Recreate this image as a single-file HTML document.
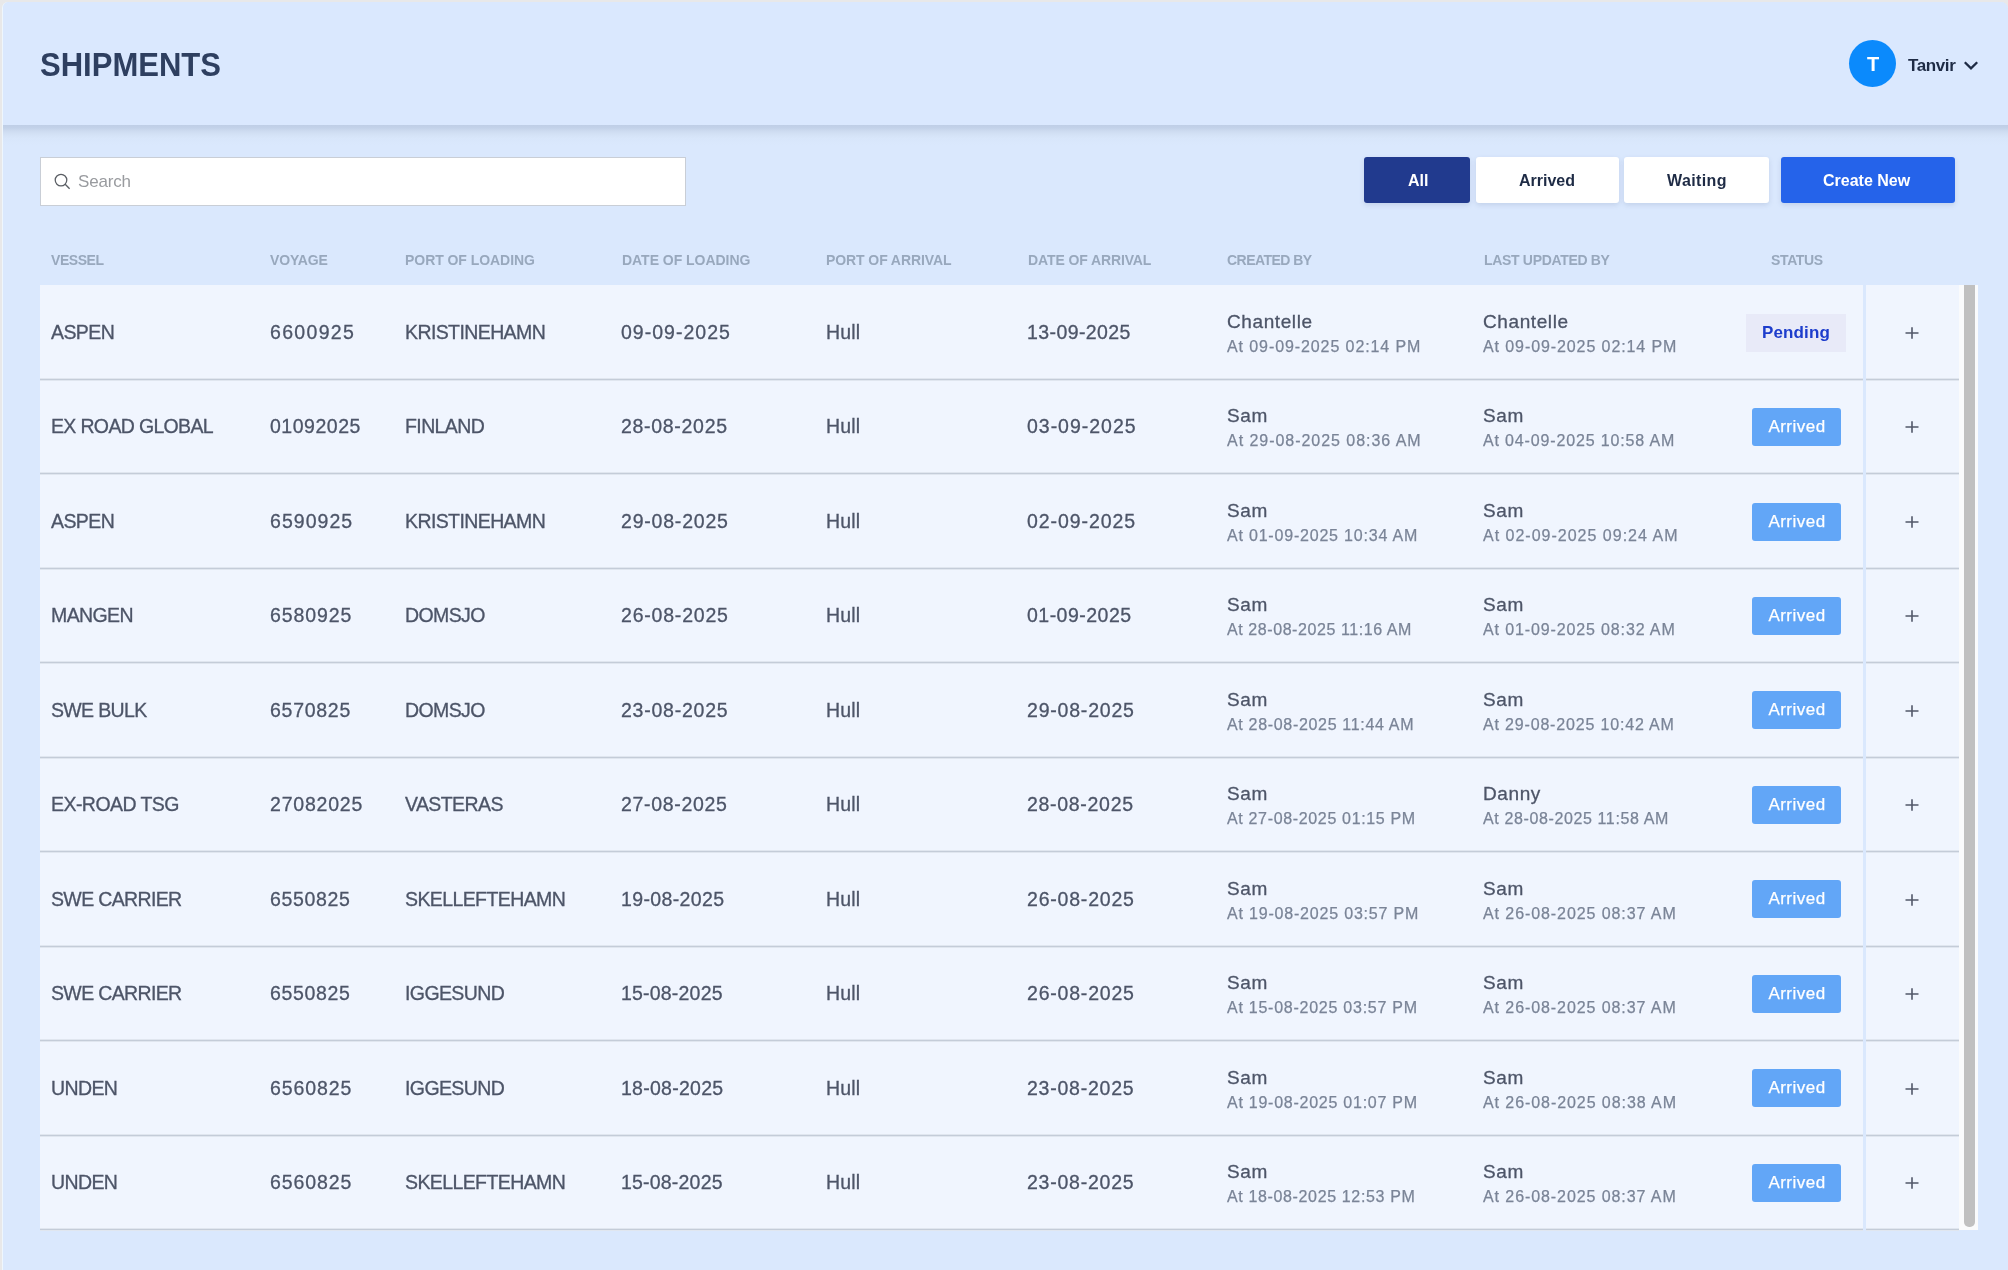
<!DOCTYPE html>
<html><head><meta charset="utf-8">
<style>
*{box-sizing:border-box;margin:0;padding:0}
html,body{width:2008px;height:1270px;overflow:hidden;background:#e8e8e9;font-family:"Liberation Sans",sans-serif}
#root{position:absolute;left:0;top:0;width:2008px;height:1270px;will-change:transform}
#root>div,#root>svg{position:absolute}
div{white-space:nowrap}
#app{left:2px;top:2px;width:2006px;height:1268px;background:#dae8fd;border-radius:6px 7px 0 0;border-left:1px solid #eef6fd}
#hdr{left:3px;top:2px;width:2005px;height:123px;background:#dae8fe;border-radius:6px 7px 0 0}
#hsh{left:3px;top:125px;width:2005px;height:20px;background:linear-gradient(#bfcee6 0px,#c3d2e9 3px,#cddbf0 6px,#d3e1f5 9px,#d8e6fa 13px,#dae8fd 20px)}
#title{left:40px;top:46px;font-size:33px;font-weight:bold;color:#2e3f60;letter-spacing:0;transform:scaleX(0.94);transform-origin:0 0}
#avatar{left:1849px;top:40px;width:47px;height:47px;border-radius:50%;background:#0b8afc}
#avT{left:1867px;top:53px;font-size:20px;font-weight:bold;color:#fff;letter-spacing:0}
#uname{left:1908px;top:56px;font-size:17px;font-weight:bold;color:#1e2b45;letter-spacing:-0.4px}
#chev{left:1963px;top:60px}
#search{left:40px;top:157px;width:646px;height:49px;background:#fff;border:1.5px solid #c9ced6}
#stext{left:78px;top:172px;font-size:17px;color:#999b9f;letter-spacing:-0.18px}
#sicon{left:51px;top:170px}
.btn{top:157px;height:46px;border-radius:3px;box-shadow:0 2px 5px rgba(100,120,160,.2)}
.bt{font-size:16px;font-weight:bold;top:172px}
#bAll{left:1364px;width:106px;background:#213a8e}
#bArr{left:1476px;width:143px;background:#fff}
#bWait{left:1624px;width:145px;background:#fff}
#bNew{left:1781px;width:174px;background:#2563ea}
.th{top:252px;font-size:14px;font-weight:bold;color:#98a8bd}
.rw{left:40px;width:1823px;background:#f0f5fe}
.ac{left:1866px;width:93px;background:#f0f5fe}
.ln{left:40px;width:1823px;height:1px;background:#c4ccd8;box-shadow:0 1px 0 #e0e6ef,0 -1px 0 #e0e6ef}
.lna{left:1866px;width:93px;height:1px;background:#c4ccd8;box-shadow:0 1px 0 #e0e6ef,0 -1px 0 #e0e6ef}
.c{font-size:19.5px;color:#4d5568;-webkit-text-stroke:0.3px #4d5568}
.n{font-size:19px;color:#4d5568;-webkit-text-stroke:0.3px #4d5568}
.d{font-size:16px;color:#7a8497;-webkit-text-stroke:0.25px #7a8497}
.arr{left:1752px;width:89px;height:38px;border-radius:3px;background:#62a6f7;color:#fff;-webkit-text-stroke:0.25px #fff;font-size:17px;line-height:38px;text-align:center;letter-spacing:0.48px;padding-left:1px}
.pen{left:1746px;width:100px;height:38px;border-radius:0;background:#e8eaf8;color:#1d3dcc;font-size:17px;font-weight:bold;line-height:38px;text-align:center;letter-spacing:0.1px}
.pl{left:1904px}
#sbt{left:1959px;top:285px;width:19px;height:945px;background:#fafbfc}
#thumb{left:1964px;top:285px;width:11px;height:942px;background:#c0c0c0;border-radius:0 0 5px 5px}
</style></head><body><div id="root">
<div id="app"></div>
<div id="hdr"></div>
<div id="hsh"></div>
<div id="title">SHIPMENTS</div>
<div id="avatar"></div>
<div id="avT">T</div>
<div id="uname">Tanvir</div>
<svg id="chev" width="16" height="11" viewBox="0 0 16 11"><path d="M1.8 2.2 L8 8.4 L14.2 2.2" fill="none" stroke="#1e2b45" stroke-width="2.3"/></svg>
<div id="search"></div>
<svg id="sicon" width="20" height="20" viewBox="0 0 20 20"><circle cx="10" cy="10.1" r="5.8" fill="none" stroke="#5a5e64" stroke-width="1.25"/><path d="M14.2 14.3 L18.6 18.7" stroke="#5a5e64" stroke-width="1.35"/></svg>
<div id="stext">Search</div>
<div class="btn" id="bAll"></div>
<div class="btn" id="bArr"></div>
<div class="btn" id="bWait"></div>
<div class="btn" id="bNew"></div>
<div class="bt" style="left:1408px;color:#fff">All</div>
<div class="bt" style="left:1519px;color:#1e2b45">Arrived</div>
<div class="bt" style="left:1667px;color:#1e2b45;letter-spacing:0.4px">Waiting</div>
<div class="bt" style="left:1823px;color:#fff">Create New</div>
<div class="th" style="left:51px;letter-spacing:-0.46px">VESSEL</div>
<div class="th" style="left:270px;letter-spacing:-0.14px">VOYAGE</div>
<div class="th" style="left:405px;letter-spacing:-0.05px">PORT OF LOADING</div>
<div class="th" style="left:622px;letter-spacing:-0.03px">DATE OF LOADING</div>
<div class="th" style="left:826px;letter-spacing:-0.09px">PORT OF ARRIVAL</div>
<div class="th" style="left:1028px;letter-spacing:-0.11px">DATE OF ARRIVAL</div>
<div class="th" style="left:1227px;letter-spacing:-0.54px">CREATED BY</div>
<div class="th" style="left:1484px;letter-spacing:-0.32px">LAST UPDATED BY</div>
<div class="th" style="left:1771px;letter-spacing:-0.36px">STATUS</div>
<div class="rw" style="top:285px;height:94px"></div><div class="ac" style="top:285px;height:94px"></div>
<div class="c" style="left:51px;top:321px;letter-spacing:-0.60px">ASPEN</div>
<div class="c" style="left:270px;top:321px;letter-spacing:1.32px">6600925</div>
<div class="c" style="left:405px;top:321px;letter-spacing:-0.60px">KRISTINEHAMN</div>
<div class="c" style="left:621px;top:321px;letter-spacing:1.02px">09-09-2025</div>
<div class="c" style="left:826px;top:321px;letter-spacing:0.13px">Hull</div>
<div class="c" style="left:1027px;top:321px;letter-spacing:0.41px">13-09-2025</div>
<div class="n" style="left:1227px;top:311px;letter-spacing:0.60px">Chantelle</div>
<div class="d" style="left:1227px;top:338px;letter-spacing:0.91px">At 09-09-2025 02:14 PM</div>
<div class="n" style="left:1483px;top:311px;letter-spacing:0.60px">Chantelle</div>
<div class="d" style="left:1483px;top:338px;letter-spacing:0.91px">At 09-09-2025 02:14 PM</div>
<div class="pen" style="top:314px">Pending</div>
<svg class="pl" style="top:325px" width="16" height="16" viewBox="0 0 16 16"><path d="M1.5 8H14.5M8 2.2V13.8" stroke="#525869" stroke-width="1.6"/></svg>
<div class="rw" style="top:379px;height:95px"></div><div class="ac" style="top:379px;height:95px"></div>
<div class="c" style="left:51px;top:415px;letter-spacing:-0.66px">EX ROAD GLOBAL</div>
<div class="c" style="left:270px;top:415px;letter-spacing:0.53px">01092025</div>
<div class="c" style="left:405px;top:415px;letter-spacing:-0.60px">FINLAND</div>
<div class="c" style="left:621px;top:415px;letter-spacing:0.70px">28-08-2025</div>
<div class="c" style="left:826px;top:415px;letter-spacing:0.13px">Hull</div>
<div class="c" style="left:1027px;top:415px;letter-spacing:0.98px">03-09-2025</div>
<div class="n" style="left:1227px;top:405px;letter-spacing:0.60px">Sam</div>
<div class="d" style="left:1227px;top:432px;letter-spacing:0.96px">At 29-08-2025 08:36 AM</div>
<div class="n" style="left:1483px;top:405px;letter-spacing:0.60px">Sam</div>
<div class="d" style="left:1483px;top:432px;letter-spacing:0.85px">At 04-09-2025 10:58 AM</div>
<div class="arr" style="top:408px">Arrived</div>
<svg class="pl" style="top:419px" width="16" height="16" viewBox="0 0 16 16"><path d="M1.5 8H14.5M8 2.2V13.8" stroke="#525869" stroke-width="1.6"/></svg>
<div class="rw" style="top:474px;height:94px"></div><div class="ac" style="top:474px;height:94px"></div>
<div class="c" style="left:51px;top:510px;letter-spacing:-0.60px">ASPEN</div>
<div class="c" style="left:270px;top:510px;letter-spacing:1.05px">6590925</div>
<div class="c" style="left:405px;top:510px;letter-spacing:-0.60px">KRISTINEHAMN</div>
<div class="c" style="left:621px;top:510px;letter-spacing:0.80px">29-08-2025</div>
<div class="c" style="left:826px;top:510px;letter-spacing:0.13px">Hull</div>
<div class="c" style="left:1027px;top:510px;letter-spacing:0.92px">02-09-2025</div>
<div class="n" style="left:1227px;top:500px;letter-spacing:0.60px">Sam</div>
<div class="d" style="left:1227px;top:527px;letter-spacing:0.80px">At 01-09-2025 10:34 AM</div>
<div class="n" style="left:1483px;top:500px;letter-spacing:0.60px">Sam</div>
<div class="d" style="left:1483px;top:527px;letter-spacing:1.00px">At 02-09-2025 09:24 AM</div>
<div class="arr" style="top:503px">Arrived</div>
<svg class="pl" style="top:514px" width="16" height="16" viewBox="0 0 16 16"><path d="M1.5 8H14.5M8 2.2V13.8" stroke="#525869" stroke-width="1.6"/></svg>
<div class="rw" style="top:568px;height:95px"></div><div class="ac" style="top:568px;height:95px"></div>
<div class="c" style="left:51px;top:604px;letter-spacing:-0.60px">MANGEN</div>
<div class="c" style="left:270px;top:604px;letter-spacing:0.90px">6580925</div>
<div class="c" style="left:405px;top:604px;letter-spacing:-0.60px">DOMSJO</div>
<div class="c" style="left:621px;top:604px;letter-spacing:0.80px">26-08-2025</div>
<div class="c" style="left:826px;top:604px;letter-spacing:0.13px">Hull</div>
<div class="c" style="left:1027px;top:604px;letter-spacing:0.48px">01-09-2025</div>
<div class="n" style="left:1227px;top:594px;letter-spacing:0.60px">Sam</div>
<div class="d" style="left:1227px;top:621px;letter-spacing:0.58px">At 28-08-2025 11:16 AM</div>
<div class="n" style="left:1483px;top:594px;letter-spacing:0.60px">Sam</div>
<div class="d" style="left:1483px;top:621px;letter-spacing:0.87px">At 01-09-2025 08:32 AM</div>
<div class="arr" style="top:597px">Arrived</div>
<svg class="pl" style="top:608px" width="16" height="16" viewBox="0 0 16 16"><path d="M1.5 8H14.5M8 2.2V13.8" stroke="#525869" stroke-width="1.6"/></svg>
<div class="rw" style="top:663px;height:94px"></div><div class="ac" style="top:663px;height:94px"></div>
<div class="c" style="left:51px;top:699px;letter-spacing:-0.66px">SWE BULK</div>
<div class="c" style="left:270px;top:699px;letter-spacing:0.73px">6570825</div>
<div class="c" style="left:405px;top:699px;letter-spacing:-0.60px">DOMSJO</div>
<div class="c" style="left:621px;top:699px;letter-spacing:0.76px">23-08-2025</div>
<div class="c" style="left:826px;top:699px;letter-spacing:0.13px">Hull</div>
<div class="c" style="left:1027px;top:699px;letter-spacing:0.80px">29-08-2025</div>
<div class="n" style="left:1227px;top:689px;letter-spacing:0.60px">Sam</div>
<div class="d" style="left:1227px;top:716px;letter-spacing:0.68px">At 28-08-2025 11:44 AM</div>
<div class="n" style="left:1483px;top:689px;letter-spacing:0.60px">Sam</div>
<div class="d" style="left:1483px;top:716px;letter-spacing:0.83px">At 29-08-2025 10:42 AM</div>
<div class="arr" style="top:691px">Arrived</div>
<svg class="pl" style="top:703px" width="16" height="16" viewBox="0 0 16 16"><path d="M1.5 8H14.5M8 2.2V13.8" stroke="#525869" stroke-width="1.6"/></svg>
<div class="rw" style="top:757px;height:95px"></div><div class="ac" style="top:757px;height:95px"></div>
<div class="c" style="left:51px;top:793px;letter-spacing:-0.55px">EX-ROAD TSG</div>
<div class="c" style="left:270px;top:793px;letter-spacing:0.80px">27082025</div>
<div class="c" style="left:405px;top:793px;letter-spacing:-0.60px">VASTERAS</div>
<div class="c" style="left:621px;top:793px;letter-spacing:0.69px">27-08-2025</div>
<div class="c" style="left:826px;top:793px;letter-spacing:0.13px">Hull</div>
<div class="c" style="left:1027px;top:793px;letter-spacing:0.70px">28-08-2025</div>
<div class="n" style="left:1227px;top:783px;letter-spacing:0.60px">Sam</div>
<div class="d" style="left:1227px;top:810px;letter-spacing:0.66px">At 27-08-2025 01:15 PM</div>
<div class="n" style="left:1483px;top:783px;letter-spacing:0.60px">Danny</div>
<div class="d" style="left:1483px;top:810px;letter-spacing:0.62px">At 28-08-2025 11:58 AM</div>
<div class="arr" style="top:786px">Arrived</div>
<svg class="pl" style="top:797px" width="16" height="16" viewBox="0 0 16 16"><path d="M1.5 8H14.5M8 2.2V13.8" stroke="#525869" stroke-width="1.6"/></svg>
<div class="rw" style="top:852px;height:94px"></div><div class="ac" style="top:852px;height:94px"></div>
<div class="c" style="left:51px;top:888px;letter-spacing:-0.64px">SWE CARRIER</div>
<div class="c" style="left:270px;top:888px;letter-spacing:0.67px">6550825</div>
<div class="c" style="left:405px;top:888px;letter-spacing:-0.60px">SKELLEFTEHAMN</div>
<div class="c" style="left:621px;top:888px;letter-spacing:0.36px">19-08-2025</div>
<div class="c" style="left:826px;top:888px;letter-spacing:0.13px">Hull</div>
<div class="c" style="left:1027px;top:888px;letter-spacing:0.80px">26-08-2025</div>
<div class="n" style="left:1227px;top:878px;letter-spacing:0.60px">Sam</div>
<div class="d" style="left:1227px;top:905px;letter-spacing:0.81px">At 19-08-2025 03:57 PM</div>
<div class="n" style="left:1483px;top:878px;letter-spacing:0.60px">Sam</div>
<div class="d" style="left:1483px;top:905px;letter-spacing:0.92px">At 26-08-2025 08:37 AM</div>
<div class="arr" style="top:880px">Arrived</div>
<svg class="pl" style="top:892px" width="16" height="16" viewBox="0 0 16 16"><path d="M1.5 8H14.5M8 2.2V13.8" stroke="#525869" stroke-width="1.6"/></svg>
<div class="rw" style="top:946px;height:95px"></div><div class="ac" style="top:946px;height:95px"></div>
<div class="c" style="left:51px;top:982px;letter-spacing:-0.64px">SWE CARRIER</div>
<div class="c" style="left:270px;top:982px;letter-spacing:0.67px">6550825</div>
<div class="c" style="left:405px;top:982px;letter-spacing:-0.60px">IGGESUND</div>
<div class="c" style="left:621px;top:982px;letter-spacing:0.20px">15-08-2025</div>
<div class="c" style="left:826px;top:982px;letter-spacing:0.13px">Hull</div>
<div class="c" style="left:1027px;top:982px;letter-spacing:0.80px">26-08-2025</div>
<div class="n" style="left:1227px;top:972px;letter-spacing:0.60px">Sam</div>
<div class="d" style="left:1227px;top:999px;letter-spacing:0.75px">At 15-08-2025 03:57 PM</div>
<div class="n" style="left:1483px;top:972px;letter-spacing:0.60px">Sam</div>
<div class="d" style="left:1483px;top:999px;letter-spacing:0.92px">At 26-08-2025 08:37 AM</div>
<div class="arr" style="top:975px">Arrived</div>
<svg class="pl" style="top:986px" width="16" height="16" viewBox="0 0 16 16"><path d="M1.5 8H14.5M8 2.2V13.8" stroke="#525869" stroke-width="1.6"/></svg>
<div class="rw" style="top:1041px;height:94px"></div><div class="ac" style="top:1041px;height:94px"></div>
<div class="c" style="left:51px;top:1077px;letter-spacing:-0.60px">UNDEN</div>
<div class="c" style="left:270px;top:1077px;letter-spacing:0.90px">6560825</div>
<div class="c" style="left:405px;top:1077px;letter-spacing:-0.60px">IGGESUND</div>
<div class="c" style="left:621px;top:1077px;letter-spacing:0.26px">18-08-2025</div>
<div class="c" style="left:826px;top:1077px;letter-spacing:0.13px">Hull</div>
<div class="c" style="left:1027px;top:1077px;letter-spacing:0.76px">23-08-2025</div>
<div class="n" style="left:1227px;top:1067px;letter-spacing:0.60px">Sam</div>
<div class="d" style="left:1227px;top:1094px;letter-spacing:0.75px">At 19-08-2025 01:07 PM</div>
<div class="n" style="left:1483px;top:1067px;letter-spacing:0.60px">Sam</div>
<div class="d" style="left:1483px;top:1094px;letter-spacing:0.93px">At 26-08-2025 08:38 AM</div>
<div class="arr" style="top:1069px">Arrived</div>
<svg class="pl" style="top:1081px" width="16" height="16" viewBox="0 0 16 16"><path d="M1.5 8H14.5M8 2.2V13.8" stroke="#525869" stroke-width="1.6"/></svg>
<div class="rw" style="top:1135px;height:94px"></div><div class="ac" style="top:1135px;height:94px"></div>
<div class="c" style="left:51px;top:1171px;letter-spacing:-0.60px">UNDEN</div>
<div class="c" style="left:270px;top:1171px;letter-spacing:0.90px">6560825</div>
<div class="c" style="left:405px;top:1171px;letter-spacing:-0.60px">SKELLEFTEHAMN</div>
<div class="c" style="left:621px;top:1171px;letter-spacing:0.20px">15-08-2025</div>
<div class="c" style="left:826px;top:1171px;letter-spacing:0.13px">Hull</div>
<div class="c" style="left:1027px;top:1171px;letter-spacing:0.76px">23-08-2025</div>
<div class="n" style="left:1227px;top:1161px;letter-spacing:0.60px">Sam</div>
<div class="d" style="left:1227px;top:1188px;letter-spacing:0.64px">At 18-08-2025 12:53 PM</div>
<div class="n" style="left:1483px;top:1161px;letter-spacing:0.60px">Sam</div>
<div class="d" style="left:1483px;top:1188px;letter-spacing:0.92px">At 26-08-2025 08:37 AM</div>
<div class="arr" style="top:1164px">Arrived</div>
<svg class="pl" style="top:1175px" width="16" height="16" viewBox="0 0 16 16"><path d="M1.5 8H14.5M8 2.2V13.8" stroke="#525869" stroke-width="1.6"/></svg>
<div class="ln" style="top:379px"></div><div class="lna" style="top:379px"></div>
<div class="ln" style="top:473px"></div><div class="lna" style="top:473px"></div>
<div class="ln" style="top:568px"></div><div class="lna" style="top:568px"></div>
<div class="ln" style="top:662px"></div><div class="lna" style="top:662px"></div>
<div class="ln" style="top:757px"></div><div class="lna" style="top:757px"></div>
<div class="ln" style="top:851px"></div><div class="lna" style="top:851px"></div>
<div class="ln" style="top:946px"></div><div class="lna" style="top:946px"></div>
<div class="ln" style="top:1040px"></div><div class="lna" style="top:1040px"></div>
<div class="ln" style="top:1135px"></div><div class="lna" style="top:1135px"></div>
<div class="ln" style="top:1229px"></div><div class="lna" style="top:1229px"></div>
<div id="sbt"></div>
<div id="thumb"></div>
</div></body></html>
